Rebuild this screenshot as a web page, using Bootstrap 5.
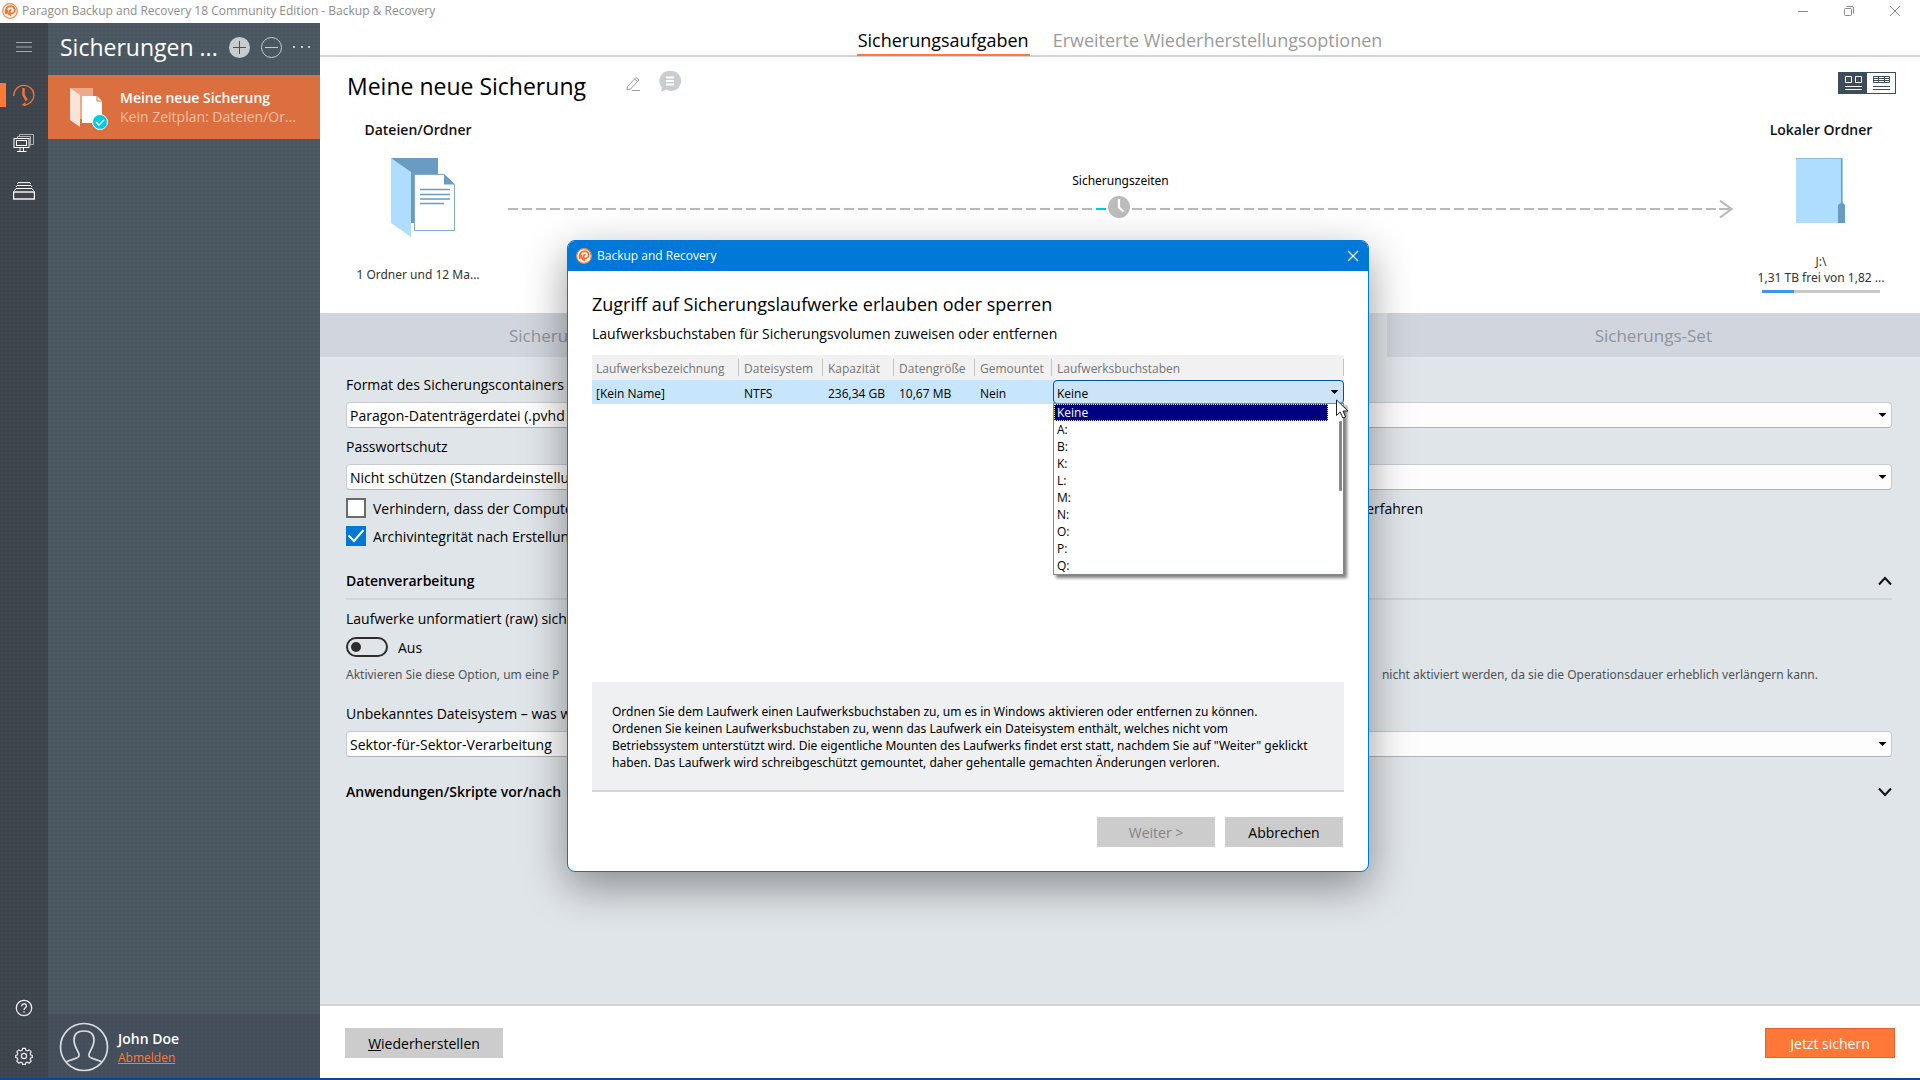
<!DOCTYPE html>
<html lang="de">
<head>
<meta charset="utf-8">
<meta name="viewport" content="width=device-width, initial-scale=1">
<title>Paragon Backup and Recovery 18 Community Edition - Backup &amp; Recovery</title>
<link href="https://cdn.jsdelivr.net/npm/bootstrap@5.3.0/dist/css/bootstrap.min.css" rel="stylesheet">
<style>
:root{--orange:#ff7838;--line:#d0d5da;--ui:"Open Sans","Noto Sans",sans-serif;--ui-small:"Noto Sans","Open Sans",sans-serif}
body{font-family:var(--ui);font-size:14px;line-height:20px;color:#000;background:#fff;min-height:100vh;border-bottom:2px solid #08489a;overflow:hidden}
svg{display:block;flex:none}
.btn-bare{border:0;background:none;padding:0;color:inherit}
.caption-bar{height:23px;padding:0 20px 2px 2px;color:#8c8c8c;font-size:12px;line-height:19px}
.caption-bar .ctl{gap:36px}
.rail{width:48px;background-color:#3d444b}
.texture{background-image:radial-gradient(rgba(255,255,255,.02) 1px,transparent 1px);background-size:4px 4px}
.rail-item{width:48px;height:48px;display:flex;align-items:center;justify-content:center;color:#fff;position:relative}
.rail-item.active::before{content:"";position:absolute;left:0;top:12px;width:6px;height:24px;background:var(--orange)}
.side{width:272px;background-color:#4a5761;color:#fff}
.side-head{height:52px;padding:0 8px 4px 12px;gap:11px}
.side-head h1{font-size:23px;line-height:30px;font-weight:400;margin:0;width:158px;white-space:nowrap}
.job{height:64px;background:#dc6f3f;padding:12px 16px 0 22px;color:#fff;text-decoration:none;gap:12px}
.job div{padding-top:1px}
.job b,.semi{font-weight:600}
.job small{font-size:14px;line-height:18px;color:#f3bea4;display:block;white-space:nowrap}
.user{height:64px;background-color:#434e5a;padding:2px 11px 0;gap:9px}
.user .semi{padding-top:1px}
.user a{color:var(--orange);font-size:12px;line-height:18px;display:block}
.topnav{height:34px;border-bottom:2px solid var(--line);gap:22px;font-size:18px;line-height:24px}
.topnav a{color:#9b9b9b;text-decoration:none;height:33px;padding:5px 1px 0}
.topnav a.active{color:#000;border-bottom:2px solid var(--orange)}
.overview{height:256px;padding:0 24px 0 25px}
.overview h2{font-size:23px;line-height:32px;font-weight:400;margin:0;padding-left:2px;width:264px;white-space:nowrap}
.title-row{padding-top:13px;height:63px;gap:16px}
.viewsw{border:1px solid #3d4b5a;height:22px;margin-top:2px}
.viewsw button{width:28px;display:flex;align-items:center;justify-content:center;color:#3d4b5a}
.viewsw .on{background:#3d4b5a;color:#fff}
.pen{margin-top:6px}
.bubble{margin:1px 0 0 2px}
.endpoint{width:146px;text-align:center;font-family:var(--ui-small);font-size:12px;line-height:16px;color:#333;white-space:nowrap}
.endpoint:last-child{margin-right:2px}
.endpoint h3{font-family:var(--ui);font-size:14px;line-height:20px;font-weight:600;margin:0 0 18px;color:#111}
.endpoint .pic{height:96px;display:flex;justify-content:center}
.endpoint .shifted{padding-left:10px}
.amount{margin-top:13px}
.space{height:3px;width:118px;border-radius:0;margin:4px auto 0;background:#c8c8c8}
.space .progress-bar{background:#3c97e8}
.flow{padding:52px 0 0;margin:0 15px 0 17px;font-family:var(--ui-small);font-size:12px;line-height:18px}
.flow-line{margin-top:6px}
.flow .clock{margin-bottom:4px}
.dash{flex:1;height:2px;background:repeating-linear-gradient(90deg,#b9b9b9 0 10px,transparent 10px 14px)}
.dash.tail{background:repeating-linear-gradient(270deg,transparent 0 3px,#b9b9b9 3px 13px,transparent 13px 14px)}
.dash-on{width:10px;height:2px;background:#00cfdc}
.steps{height:44px;background:#d1d5dd}
.steps button{flex:0 0 33.3333%;border:0;border-radius:0;font-size:17px;line-height:24px;color:#8f949a;padding:11px 0 9px}
.steps .on{background:#e0e5e9}
.steps .first{text-align:left;padding-left:189px}
.settings{background:#e0e5e9;padding:9px 28px 0 26px}
.settings .form-label{display:block;margin:9px 0 7px;height:20px}
.settings .form-label.apart{margin-top:19px}
.combo{height:26px;border:1px solid #c9cccf;border-bottom-color:#b0b3b6;border-radius:4px;padding:1px 24px 0 3px;font-size:14px;line-height:20px;color:#000;background-color:#fdfdfd;background-size:7px 4px;background-position:right 5px center;background-image:url("data:image/svg+xml,%3csvg xmlns='http://www.w3.org/2000/svg' viewBox='0 0 7 4'%3e%3cpath d='M0 0h7v.500L3.500 4 0 .500z'/%3e%3c/svg%3e")}
.tick{gap:7px;height:20px;white-space:nowrap}
.tick .form-check-input{width:20px;height:20px;margin:0;border:2px solid #6b6b6b;border-radius:0;flex:none}
.tick .form-check-input:checked{background-color:#0078d7;border-color:#0078d7;background-size:20px 20px;background-image:url("data:image/svg+xml,%3csvg xmlns='http://www.w3.org/2000/svg' viewBox='0 0 20 20'%3e%3cpath d='M2.5 9.5 8 15 17.500 4' fill='none' stroke='white' stroke-width='2'/%3e%3c/svg%3e")}
.tick label{flex:1;padding-top:1px}
.far{width:1050px}
.note{font-family:var(--ui-small);font-size:12px;line-height:20px;color:#4f5356;white-space:nowrap}
.note-run{width:1472px}
.fold{height:20px;font-weight:600}
.fold-gap{margin-top:25px}
.section-rule{border-bottom:2px solid var(--line);height:29px}
.toggle{gap:10px;height:20px}
.toggle span{padding-top:2px}
.toggle .form-check-input{width:42px;height:20px;margin:0;border:2px solid #2d2d2d;background-color:transparent;background-size:14px 14px;background-position:1px center;background-image:url("data:image/svg+xml,%3csvg xmlns='http://www.w3.org/2000/svg' viewBox='0 0 14 14'%3e%3ccircle cx='7' cy='7' r='5' fill='%232d2d2d'/%3e%3c/svg%3e")}
.bottom{height:74px;border-top:2px solid var(--line);padding:2px 25px 0}
.flat{height:30px;border:0;border-radius:0;background:#ccc;color:#000;font-size:14px;line-height:20px;padding:6px 0 4px;min-width:118px}
.flat:disabled{background:#ccc;color:#858585;opacity:1}
.flat.wide{width:158px}
.flat.go{width:130px;background:var(--orange);color:#fff;border:1px solid #e2622a;padding:5px 0 3px}
/* dialog window floating over the workspace */
.dlg{position:absolute;left:567px;top:240px;width:802px;border:1px solid #0078d7;border-radius:8px;background:#fff;box-shadow:0 14px 44px rgba(0,0,0,.4)}
.dlg-title{height:30px;background:#0078d7;color:#fff;font-size:12px;border-radius:7px 7px 0 0;padding:0 9px 0 8px;gap:5px}
.dlg-body{padding:21px 24px 24px}
.dlg h2{font-size:18px;line-height:24px;font-weight:400;margin:0}
.dlg p{margin:8px 0 11px}
.drives{table-layout:fixed;width:100%;font-size:12px;line-height:17px;margin:0 0 278px}
.drives th{font-weight:400;color:#757575;background:#f1f1f1;height:25px;padding:0;vertical-align:middle}
.drives th span{display:block;border-right:1px solid #c4c4c4;padding-left:5px;height:17px;line-height:19px;white-space:nowrap}
.drives th:first-child span,.drives td:first-child{padding-left:4px}
.drives td{background:#c7e6fe;height:24px;padding:2px 0 0 5px;white-space:nowrap}
.drives td.pick{padding:0 0 0 1px;position:relative}
.pick .combo{font-size:12px;line-height:18px;height:24px;border:1px solid #005499;background-color:#cce4f7;padding:3px 24px 0 3px;width:100%}
.letters{position:absolute;left:1px;right:0;top:23px;height:172px;border:1px solid #828790;background:#fff;box-shadow:3px 3px 3px rgba(0,0,0,.5);list-style:none;margin:0;padding:0;overflow:hidden}
.letters li{height:17px;line-height:18px;padding-left:3px;margin-right:15px}
.letters li[aria-selected=true]{background:#000080;color:#fff;outline:1px dotted #ffff7f;outline-offset:-1px}
.letters .thumb{position:absolute;right:1px;top:17px;width:3px;height:70px;background:#868686;border-radius:1px}
.pointer{position:absolute;right:-5px;top:19px}
.hint{background:#eff0f2;border-bottom:2px solid var(--line);font-family:var(--ui-small);font-size:12px;line-height:17px;padding:21px 20px 20px;height:110px;white-space:nowrap}
.actions{gap:10px;margin-top:25px;padding-right:1px}
</style>
</head>
<body class="d-flex flex-column">
<svg width="0" height="0" class="position-absolute" aria-hidden="true"><defs>
<symbol id="logo" viewBox="0 0 16 16"><circle cx="8" cy="8" r="7.300" fill="#fff3ea" stroke="#f08a4c" stroke-width="1.200"/><path d="M4 11C2.500 6.500 5 3.200 8.800 3.200c3 0 4.600 2.800 3.600 5.300-1 2.200-3.800 2.400-4.600.8-.6-1.500.6-2.700 1.700-2.200M5.500 6.500c-.6 3 1 5 3.600 6" fill="none" stroke="#ee7530" stroke-width="1.800"/></symbol>
</defs></svg>

<header class="caption-bar d-flex align-items-center justify-content-between">
  <div class="d-flex align-items-center gap-1"><svg width="16" height="16"><use href="#logo"/></svg><span>Paragon Backup and Recovery 18 Community Edition - Backup &amp; Recovery</span></div>
  <div class="ctl d-flex align-items-center">
    <button class="btn-bare" aria-label="Minimieren"><svg width="10" height="12" stroke="#888" fill="none"><path d="M0 6.500h10"/></svg></button>
    <button class="btn-bare" aria-label="Wiederherstellen"><svg width="10" height="12" stroke="#888" fill="none"><rect x=".5" y="3.500" width="7" height="7" rx="1"/><path d="M2.500 1.500H8a1.500 1.500 0 0 1 1.500 1.500v5.500"/></svg></button>
    <button class="btn-bare" aria-label="Schließen"><svg width="10" height="12" stroke="#888" fill="none"><path d="M0 1l10 10M10 1L0 11"/></svg></button>
  </div>
</header>

<div class="d-flex flex-grow-1">
  <nav class="rail texture d-flex flex-column" aria-label="Bereiche">
    <a class="rail-item" href="#" aria-label="Menü"><svg width="16" height="10" stroke="#a5a9ad"><path d="M0 .5h16M0 5h16M0 9.500h16"/></svg></a>
    <a class="rail-item active" href="#" aria-label="Sicherungen"><svg width="22" height="22" fill="none" stroke="#f0753b"><path d="M.8 12A10 10 0 0 1 21 11a10 10 0 0 1-10 9.800" stroke-width="1.300"/><path d="M12.500 18.800l-2.500 2 3 1" stroke-width="1.200"/><path d="M10.500 4v7l3.200 5.500" stroke-width="2.500"/></svg></a>
    <a class="rail-item" href="#" aria-label="Computer"><svg width="22" height="20" fill="none" stroke="#fff"><path d="M6.500 3V1.500h14v10H18" stroke="#aeb2b6"/><path d="M4.500 5V3.500h13v9" stroke="#aeb2b6"/><rect x="1" y="5.500" width="15" height="9"/><rect x="3.500" y="7.500" width="10" height="5"/><path d="M7 15v3M10.500 15v3M4 18.500h9.500"/></svg></a>
    <a class="rail-item" href="#" aria-label="Archive"><svg width="22" height="18" fill="none" stroke="#fff"><rect x=".5" y="10" width="21" height="7" stroke-width="1.400"/><path d="M1.500 8.500L3 6.500h16l1.500 2M3 5l1-1.500h14L19 5M4.500 2l.6-1.400h11.800l.6 1.400"/></svg></a>
    <a class="rail-item mt-auto pt-1" href="#" aria-label="Hilfe"><svg width="18" height="18" fill="none" stroke="#e8e9ea" stroke-width="1.300"><circle cx="9" cy="9" r="7.700"/><path d="M6.700 7.300C6.700 4 11.400 4 11.400 6.900 11.400 8.700 9 8.700 9 11M9 12.300v1.500"/></svg></a>
    <a class="rail-item pt-1" href="#" aria-label="Einstellungen"><svg width="18" height="18" fill="none" stroke="#e8e9ea" stroke-width="1.200"><circle cx="9" cy="9" r="2.600"/><path d="M7.600 1.300h2.800l.5 2 1.500.6 1.800-1 2 2-1 1.800.6 1.400 1.500.4v1.900l-1.500.6-.6 1.500 1 1.700-2 2-1.800-1-1.500.6-.5 1.500H7.600l-.5-1.500-1.500-.6-1.800 1-2-2 1-1.700-.6-1.500L.7 10.400V8.500l1.500-.4.6-1.400-1-1.800 2-2 1.800 1 1.500-.6z"/></svg></a>
  </nav>

  <aside class="side texture d-flex flex-column">
    <div class="side-head d-flex align-items-center">
      <h1>Sicherungen ...</h1>
      <button class="btn-bare" aria-label="Hinzufügen"><svg width="21" height="21"><circle cx="10.500" cy="10.500" r="10.500" fill="#c8ccd0"/><path d="M4 10.500h13M10.500 4v13" stroke="#45525c"/></svg></button>
      <button class="btn-bare" aria-label="Entfernen"><svg width="21" height="21" fill="none" stroke="#c8ccd0"><circle cx="10.500" cy="10.500" r="10"/><path d="M4 10.500h13"/></svg></button>
      <button class="btn-bare" aria-label="Mehr"><svg width="18" height="4" fill="#c8ccd0"><path d="M0 1h2v2H0zM8 1h2v2H8zM15 1h2v2h-2z"/></svg></button>
    </div>
    <a class="job d-flex" href="#">
      <svg width="38" height="44"><path d="M0 1h23v31H10z" fill="#eda98a"/><path d="M0 1l10 7v32L0 33z" fill="#fae3d9"/><path d="M12 9h15l5 5v22H12z" fill="#fff"/><path d="M27 9v5h5" fill="none" stroke="#dc6f3f"/><circle cx="30" cy="35" r="7.500" fill="#00cde0" stroke="#fff"/><path d="M26 35l3 3 5-5" fill="none" stroke="#fff" stroke-width="1.500"/></svg>
      <div><b class="d-block">Meine neue Sicherung</b><small>Kein Zeitplan: Dateien/Or...</small></div>
    </a>
    <div class="user texture d-flex align-items-center mt-auto">
      <svg width="50" height="50" fill="none" stroke="#d9dcdf" stroke-width="1.700"><circle cx="25" cy="25" r="23.500"/><path d="M7 40c5-3 12-3 13-6 1-4-5-8-5-16 0-6 4-9 10-9s10 3 10 9c0 8-6 12-5 16 1 3 8 3 13 6"/></svg>
      <div><div class="semi">John Doe</div><a href="#">Abmelden</a></div>
    </div>
  </aside>

  <main class="flex-grow-1 d-flex flex-column">
    <nav class="topnav d-flex justify-content-center">
      <a class="active" href="#">Sicherungsaufgaben</a><a href="#">Erweiterte Wiederherstellungsoptionen</a>
    </nav>

    <section class="overview">
      <div class="title-row d-flex">
        <h2>Meine neue Sicherung</h2>
        <button class="btn-bare align-self-start pen" aria-label="Umbenennen"><svg width="16" height="16" fill="none" stroke="#999"><path d="M2.500 10.500L11 1.500l3 2.500-8.500 9-3.500 1zM9.500 3l3 2.500M7 14.500h8"/></svg></button>
        <button class="btn-bare align-self-start bubble" aria-label="Kommentar"><svg width="22" height="22"><path d="M11 0a10 10 0 1 1-4 18.500C5 20 3 20.500 1.500 20c1-1 1.500-2 1.300-3.500A10 10 0 0 1 11 0z" fill="#c9cdd1"/><path d="M7 6.500h8M7 10h8M7 13.500h8" stroke="#fff" stroke-width="2"/></svg></button>
        <div class="viewsw d-flex ms-auto" role="group" aria-label="Ansicht">
          <button class="btn-bare on" aria-label="Kacheln"><svg width="17" height="14" fill="none" stroke="currentColor"><path d="M.5.500h6v6h-6zM10.500.500h6v6h-6zM0 10.500h17M0 13.500h17"/></svg></button>
          <button class="btn-bare" aria-label="Tabelle"><svg width="17" height="14" fill="none" stroke="currentColor"><path d="M.5.500h16v6H.5zM0 2.500h17M0 4.500h17M5.500 0v7M11.500 0v7M0 10.500h17M0 13.500h17"/></svg></button>
        </div>
      </div>
      <div class="d-flex">
        <div class="endpoint">
          <h3>Dateien/Ordner</h3>
          <div class="pic shifted"><svg width="64" height="79"><path d="M0 0h47v65H20z" fill="#6a9bc0"/><path d="M0 0l20 14v65L0 65z" fill="#aeddff"/><path d="M23.500 16.500H53l10.500 10v46h-40z" fill="#fff" stroke="#7fabcc"/><path d="M53 16l11 10.500H53z" fill="#6a9bc0"/><path d="M29 31.500h30M29 36.500h30M29 41h30M29 45.500h24" stroke="#6a9bc0" stroke-width="1.500"/></svg></div>
          <div class="amount">1 Ordner und 12 Ma...</div>
        </div>
        <div class="flow flex-grow-1">
          <div class="text-center text-black">Sicherungszeiten</div>
          <div class="flow-line d-flex align-items-center">
            <div class="dash"></div><div class="dash-on"></div>
            <svg class="clock" width="26" height="22"><circle cx="13" cy="11" r="11" fill="#bcbcbc"/><path d="M13 3v8.500l4.500 4" fill="none" stroke="#fff" stroke-width="2.200"/></svg>
            <div class="dash tail"></div>
            <svg width="14" height="18" fill="none" stroke="#b9b9b9" stroke-width="2"><path d="M1 .7L12.500 9 1 17.500M0 9h12"/></svg>
          </div>
        </div>
        <div class="endpoint">
          <h3>Lokaler Ordner</h3>
          <div class="pic"><svg width="50" height="66"><path d="M0 0h47v65H0z" fill="#aeddff"/><path d="M0 .5h46v50" stroke="#8fb9d8" fill="none"/><path d="M45.500 1v48" stroke="#6a9bc0"/><path d="M42 47l4-3 3 3v18h-7z" fill="#6a9bc0"/></svg></div>
          <div>J:\</div><div>1,31 TB frei von 1,82 ...</div>
          <div class="space progress" role="progressbar" aria-label="Belegt" aria-valuenow="27" aria-valuemin="0" aria-valuemax="100"><div class="progress-bar" style="width:27%"></div></div>
        </div>
      </div>
    </section>

    <div class="steps d-flex">
      <button class="btn first">Sicheru</button><button class="btn on" aria-label="Sicherungsoptionen"></button><button class="btn">Sicherungs-Set</button>
    </div>

    <section class="settings flex-grow-1">
      <label class="form-label" for="fmt">Format des Sicherungscontainers</label>
      <select id="fmt" class="form-select combo"><option>Paragon-Datenträgerdatei (.pvhd</option></select>
      <label class="form-label" for="pw">Passwortschutz</label>
      <select id="pw" class="form-select combo"><option>Nicht schützen (Standardeinstellu</option></select>
      <div class="tick d-flex align-items-center mt-2"><input class="form-check-input" type="checkbox" id="c1"><label for="c1" class="d-flex"><span class="far d-flex justify-content-between"><span>Verhindern, dass der Compute</span><span>erfahren</span></span></label></div>
      <div class="tick d-flex align-items-center mt-2"><input class="form-check-input" type="checkbox" id="c2" checked><label for="c2">Archivintegrität nach Erstellun</label></div>
      <div class="section-rule fold-gap"><div class="fold d-flex justify-content-between align-items-center"><span>Datenverarbeitung</span><button class="btn-bare" aria-label="Einklappen"><svg width="14" height="10" fill="none" stroke="#111" stroke-width="2"><path d="M1 8.500l6-6.500 6 6.500"/></svg></button></div></div>
      <label class="form-label" for="raw">Laufwerke unformatiert (raw) sich</label>
      <div class="toggle d-flex align-items-center form-switch p-0 mt-2"><input class="form-check-input" type="checkbox" role="switch" id="raw"><span>Aus</span></div>
      <div class="note mt-2"><div class="note-run d-flex justify-content-between"><span>Aktivieren Sie diese Option, um eine P</span><span>nicht aktiviert werden, da sie die Operationsdauer erheblich verlängern kann.</span></div></div>
      <label class="form-label apart" for="fs">Unbekanntes Dateisystem – was w</label>
      <select id="fs" class="form-select combo"><option>Sektor-für-Sektor-Verarbeitung</option></select>
      <div class="fold fold-gap d-flex justify-content-between align-items-center"><span>Anwendungen/Skripte vor/nach</span><button class="btn-bare" aria-label="Ausklappen"><svg width="14" height="10" fill="none" stroke="#111" stroke-width="2"><path d="M1 1.500L7 8l6-6.500"/></svg></button></div>
    </section>

    <footer class="bottom d-flex justify-content-between align-items-center">
      <button class="btn flat wide"><u>W</u>iederherstellen</button>
      <button class="btn flat go"><u>J</u>etzt sichern</button>
    </footer>
  </main>
</div>

<div class="dlg" role="dialog" aria-labelledby="dt">
  <div class="dlg-title d-flex align-items-center"><svg width="16" height="16"><use href="#logo"/></svg><span id="dt" class="flex-grow-1">Backup and Recovery</span><button class="btn-bare" aria-label="Schließen"><svg width="12" height="12" stroke="#fff" stroke-width="1.200"><path d="M1 1l10 10M11 1L1 11"/></svg></button></div>
  <div class="dlg-body">
    <h2>Zugriff auf Sicherungslaufwerke erlauben oder sperren</h2>
    <p>Laufwerksbuchstaben für Sicherungsvolumen zuweisen oder entfernen</p>
    <table class="drives">
      <colgroup><col style="width:147px"><col style="width:84px"><col style="width:71px"><col style="width:81px"><col style="width:77px"><col></colgroup>
      <thead><tr><th><span>Laufwerksbezeichnung</span></th><th><span>Dateisystem</span></th><th><span>Kapazität</span></th><th><span>Datengröße</span></th><th><span>Gemountet</span></th><th><span>Laufwerksbuchstaben</span></th></tr></thead>
      <tbody><tr><td>[Kein Name]</td><td>NTFS</td><td>236,34 GB</td><td>10,67 MB</td><td>Nein</td>
      <td class="pick"><select class="form-select combo" aria-label="Laufwerksbuchstaben"><option>Keine</option></select>
        <ul class="letters" role="listbox" aria-label="Laufwerksbuchstaben"><li role="option" aria-selected="true">Keine</li><li role="option">A:</li><li role="option">B:</li><li role="option">K:</li><li role="option">L:</li><li role="option">M:</li><li role="option">N:</li><li role="option">O:</li><li role="option">P:</li><li role="option">Q:</li><li class="thumb p-0 m-0" role="presentation"></li></ul>
        <svg class="pointer" width="14" height="21"><path d="M1.500 1v15.500l3.700-3.500 2.600 6 2.700-1.200L8 12h5z" fill="#fff" stroke="#222"/></svg>
      </td></tr></tbody>
    </table>
    <div class="hint">Ordnen Sie dem Laufwerk einen Laufwerksbuchstaben zu, um es in Windows aktivieren oder entfernen zu können.<br>Ordenen Sie keinen Laufwerksbuchstaben zu, wenn das Laufwerk ein Dateisystem enthält, welches nicht vom<br>Betriebssystem unterstützt wird. Die eigentliche Mounten des Laufwerks findet erst statt, nachdem Sie auf "Weiter" geklickt<br>haben. Das Laufwerk wird schreibgeschützt gemountet, daher gehentalle gemachten Änderungen verloren.</div>
    <div class="actions d-flex justify-content-end"><button class="btn flat" disabled>Weiter &gt;</button><button class="btn flat">Abbrechen</button></div>
  </div>
</div>
<script src="https://cdn.jsdelivr.net/npm/bootstrap@5.3.0/dist/js/bootstrap.bundle.min.js"></script>
</body>
</html>
